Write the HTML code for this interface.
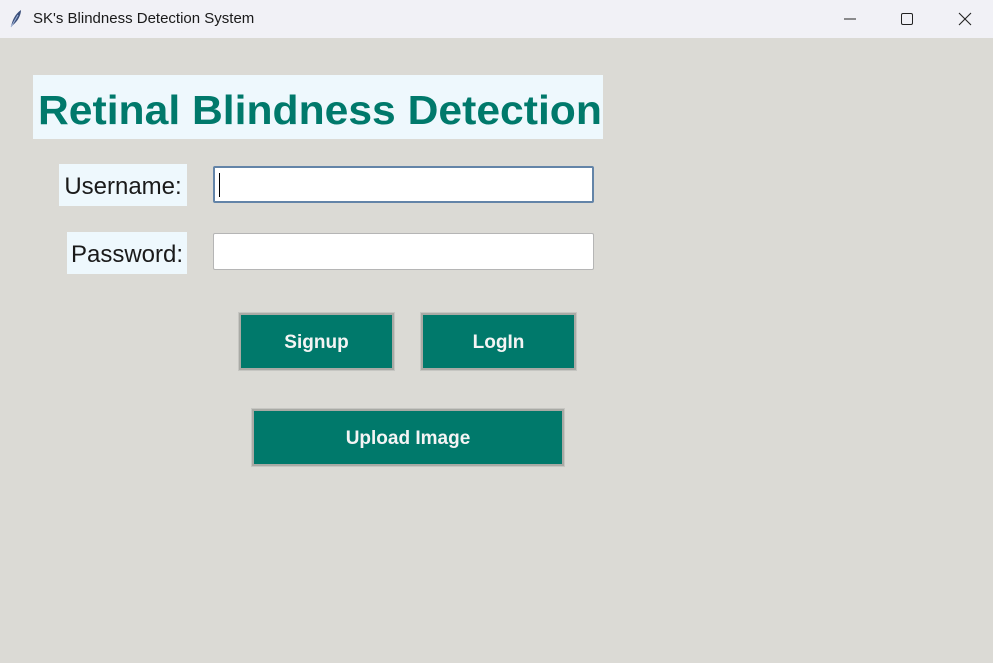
<!DOCTYPE html>
<html><head><meta charset="utf-8"><style>
*{margin:0;padding:0;box-sizing:border-box}
body{width:993px;height:663px;background:#dbdad5;position:relative;overflow:hidden;font-family:"Liberation Sans",sans-serif}
.tb{position:absolute;left:0;top:0;width:993px;height:38px;background:#f1f1f6}
.tt{position:absolute;left:33px;top:10px;font-size:15px;color:#1a1a1a}
.abs{position:absolute}
.title{left:33px;top:75px;width:570px;height:64px;background:#eef8fd;color:#00796b;font-weight:bold;font-size:41px;line-height:70px;white-space:nowrap;overflow:hidden}
.title span{display:inline-block;transform-origin:0 50%;transform:scaleX(1.04);margin-left:5px}
.lbl{background:#eef8fd;color:#1a1a1a;font-size:24px;text-align:center;white-space:nowrap}
.entry{background:#fff;border:1px solid #b5b5b5;border-radius:2px}
.btn{background:#00796b;border:2px solid #a9aaa5;outline:1px solid #c6c6c2;color:#f4f4f4;font-weight:bold;font-size:19px;text-align:center}
</style></head><body>
<div class="tb">
<svg class="abs" style="left:8px;top:9px" width="16" height="20" viewBox="0 0 16 20"><path d="M3 18 C4 12 7 5 13 1 C13 6 10 12 5 16 Z" fill="#3b4f7a"/><path d="M3 18 L10 6" stroke="#9fb3d9" stroke-width="1"/></svg>
<div class="tt">SK's Blindness Detection System</div>
<svg class="abs" style="left:843px;top:12px" width="14" height="14"><line x1="1" y1="7" x2="13" y2="7" stroke="#222" stroke-width="1"/></svg>
<svg class="abs" style="left:900px;top:12px" width="14" height="14"><rect x="1.5" y="1.5" width="11" height="11" rx="1.5" fill="none" stroke="#222" stroke-width="1"/></svg>
<svg class="abs" style="left:958px;top:12px" width="14" height="14"><path d="M1 1L13 13M13 1L1 13" stroke="#222" stroke-width="1.1"/></svg>
</div>
<div class="abs title"><span>Retinal Blindness Detection</span></div>
<div class="abs lbl" style="left:59px;top:164px;width:128px;height:42px;line-height:46px">Username:</div>
<div class="abs entry" style="left:213px;top:166px;width:381px;height:37px;border:2px solid #6384a8"><div class="abs" style="left:4px;top:5px;width:1px;height:24px;background:#000"></div></div>
<div class="abs lbl" style="left:67px;top:232px;width:120px;height:42px;line-height:46px">Password:</div>
<div class="abs entry" style="left:213px;top:233px;width:381px;height:37px"></div>
<div class="abs btn" style="left:239px;top:313px;width:155px;height:57px;line-height:55px">Signup</div>
<div class="abs btn" style="left:421px;top:313px;width:155px;height:57px;line-height:55px">LogIn</div>
<div class="abs btn" style="left:252px;top:409px;width:312px;height:57px;line-height:55px">Upload Image</div>
</body></html>
